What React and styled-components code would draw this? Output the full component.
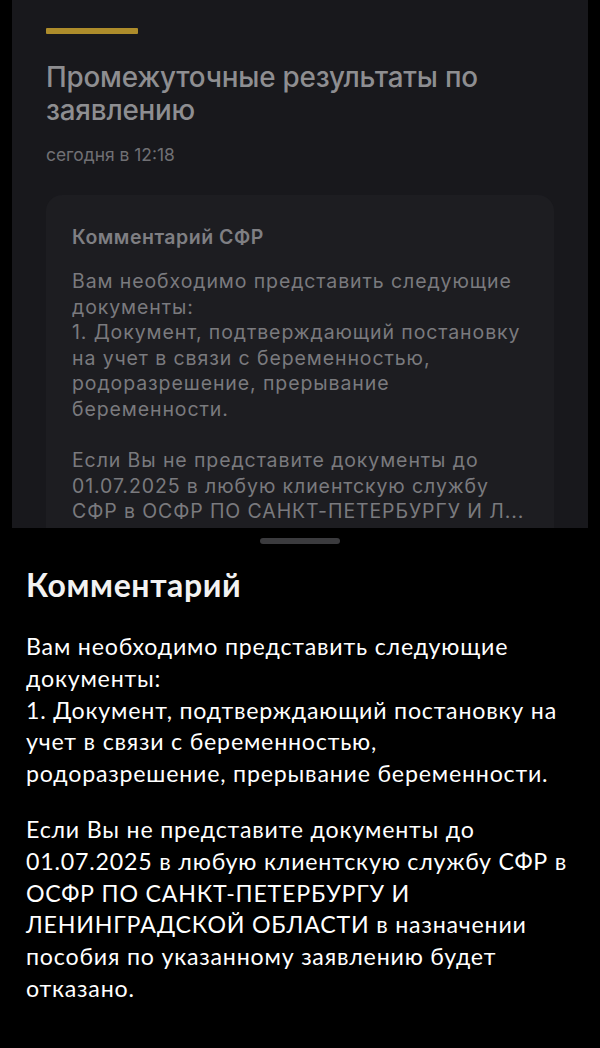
import React from "react";
import styled, { createGlobalStyle } from "styled-components";

const GlobalStyle = createGlobalStyle`
  html, body {
    margin: 0;
    padding: 0;
    background: #000;
  }
  * {
    box-sizing: border-box;
  }
`;

// lines are broken where the app breaks them
const PREVIEW_LINES = [
  "Вам необходимо представить следующие",
  "документы:",
  "1. Документ, подтверждающий постановку",
  "на учет в связи с беременностью,",
  "родоразрешение, прерывание",
  "беременности.",
  "",
  "Если Вы не представите документы до",
  "01.07.2025 в любую клиентскую службу",
  "СФР в ОСФР ПО САНКТ-ПЕТЕРБУРГУ И Л...",
];

const COMMENT_LINES = [
  [
    "Вам необходимо представить следующие",
    "документы:",
    "1. Документ, подтверждающий постановку на",
    "учет в связи с беременностью,",
    "родоразрешение, прерывание беременности.",
  ],
  [
    "Если Вы не представите документы до",
    "01.07.2025 в любую клиентскую службу СФР в",
    "ОСФР ПО САНКТ-ПЕТЕРБУРГУ И",
    "ЛЕНИНГРАДСКОЙ ОБЛАСТИ в назначении",
    "пособия по указанному заявлению будет",
    "отказано.",
  ],
];

const App = () => {
  return (
    <>
      <GlobalStyle />
      <Screen>
        <Backdrop>
          <StatusCard>
            <AccentBar />
            <StatusTitle>
              {"Промежуточные результаты по\nзаявлению"}
            </StatusTitle>
            <StatusDate>сегодня в 12:18</StatusDate>
            <CommentBox>
              <CommentBoxTitle>Комментарий СФР</CommentBoxTitle>
              <CommentPreview>{PREVIEW_LINES.join("\n")}</CommentPreview>
            </CommentBox>
          </StatusCard>
        </Backdrop>
        <Sheet>
          <Handle />
          <SheetBody>
            <SheetTitle>Комментарий</SheetTitle>
            <SheetText>
              {COMMENT_LINES.map((lines, i) => (
                <Paragraph key={i}>{lines.join("\n")}</Paragraph>
              ))}
            </SheetText>
          </SheetBody>
        </Sheet>
      </Screen>
    </>
  );
};

const Screen = styled.div`
  width: 600px;
  height: 1048px;
  background: #000;
  overflow: hidden;
  display: flex;
  flex-direction: column;
`;

const Backdrop = styled.div`
  height: 528px;
  flex-shrink: 0;
  padding: 0 12px;
  overflow: hidden;
`;

const StatusCard = styled.div`
  background: #18181c;
  border-radius: 0 0 22px 22px;
  padding: 28px 34px 40px 34px;
  min-height: 600px;
  font-family: "Inter", "Roboto", sans-serif;
`;

const AccentBar = styled.div`
  width: 92px;
  height: 6px;
  background: #ad8c2b;
  border-radius: 1px;
`;

const StatusTitle = styled.h1`
  margin: 27px 0 0 0;
  font-size: 27.8px;
  line-height: 33px;
  font-weight: 500;
  color: #8e8e91;
  letter-spacing: -0.2px;
  white-space: pre-line;
`;

const StatusDate = styled.div`
  margin-top: 17px;
  font-size: 17.4px;
  line-height: 22px;
  color: #707074;
`;

const CommentBox = styled.div`
  margin-top: 29px;
  background: #1d1d21;
  border-radius: 16px;
  padding: 30px 8px 28px 26px;
`;

const CommentBoxTitle = styled.div`
  font-size: 19.5px;
  line-height: 24px;
  font-weight: 600;
  letter-spacing: 0.5px;
  color: #7f7f83;
`;

const CommentPreview = styled.div`
  margin-top: 20px;
  font-size: 19.5px;
  line-height: 25.6px;
  letter-spacing: 0.9px;
  color: #7a7a7e;
  white-space: pre-line;
`;

const Sheet = styled.div`
  flex: 1;
  background: #000;
  padding-top: 10px;
  font-family: "Lato", "Noto Sans", sans-serif;
  color: #fff;
`;

const Handle = styled.div`
  width: 80px;
  height: 6px;
  border-radius: 3px;
  background: #3b3b3e;
  margin: 0 auto;
`;

const SheetBody = styled.div`
  padding: 0 6px 0 26px;
`;

const SheetTitle = styled.h2`
  margin: 22px 0 0 0;
  font-size: 32px;
  line-height: 38px;
  font-weight: 700;
  letter-spacing: 0.6px;
  color: #f2f2f2;
`;

const SheetText = styled.div`
  margin-top: 27px;
  display: flex;
  flex-direction: column;
  gap: 24px;
`;

const Paragraph = styled.p`
  margin: 0;
  font-size: 23.2px;
  line-height: 31.8px;
  letter-spacing: 0.8px;
  color: #fff;
  white-space: pre-line;
`;

export default App;
